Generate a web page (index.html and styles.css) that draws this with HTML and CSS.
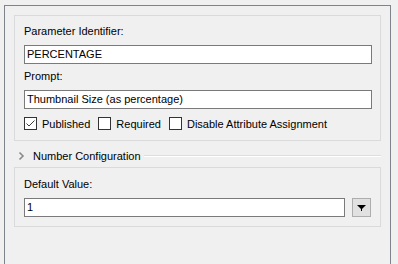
FILE: index.html
```html
<!DOCTYPE html>
<html lang="en">
  <head>
    <meta charset="UTF-8" />
    <title>Parameter Editor</title>
    <link rel="stylesheet" href="styles.css">
  </head>
  <body>
    <div class="frame">
      <div class="panel">
        <div class="label">Parameter Identifier:</div>
        <div class="field">PERCENTAGE</div>
        <div class="label">Prompt:</div>
        <div class="field">Thumbnail Size (as percentage)</div>
        <div class="checks">
          <span class="check">
            <span class="box">
              <svg width="11" height="11" viewBox="0 0 11 11">
                <polyline points="1.5,5.5 4,8 9.5,2.5" fill="none" stroke="#3c3c3c" stroke-width="1" />
              </svg>
            </span>
            Published
          </span>
          <span class="check"><span class="box"></span>Required</span>
          <span class="check"><span class="box"></span>Disable Attribute Assignment</span>
        </div>
      </div>

      <div class="section-head">
        <svg class="chevron" width="7" height="10" viewBox="0 0 7 10">
          <polyline points="1.5,1.5 5,5 1.5,8.5" fill="none" stroke="#8a8a8a" stroke-width="1.6" />
        </svg>
        <span class="section-title">Number Configuration</span>
        <span class="rule"></span>
      </div>

      <div class="panel panel-number">
        <div class="label">Default Value:</div>
        <div class="combo">
          <div class="field">1</div>
          <button class="drop">
            <svg width="9" height="6" viewBox="0 0 9 6">
              <polygon points="0,0 9,0 4.5,4.5" fill="#000" />
              <rect x="4" y="4" width="1" height="2" fill="#000" />
            </svg>
          </button>
        </div>
      </div>
    </div>
  </body>
</html>
```

FILE: styles.css
```css
body {
  margin: 0;
  padding: 0;
  background-color: #f0f0f0;
  font-family: "Liberation Sans", Arial, sans-serif;
  font-size: 11px;
  color: #000;
}
.frame {
  margin: 5px 0 0 4px;
  width: 367px;
  height: 260px;
  padding: 9px 9px 0 9px;
  border: 1px solid #7f848c;
  border-bottom: none;
}
.panel {
  border: 1px solid #dadada;
  padding: 8px 8px 9px 9px;
}
.label {
  height: 15px;
  line-height: 15px;
  margin-bottom: 6px;
}
.field {
  height: 17px;
  line-height: 17px;
  padding: 0 2px;
  background-color: #fff;
  border: 1px solid #7a7a7a;
  margin-bottom: 5px;
}
.checks {
  display: flex;
  align-items: center;
  height: 15px;
  margin-top: 7px;
}
.check {
  display: flex;
  align-items: center;
  gap: 5px;
  margin-right: 8px;
  white-space: nowrap;
}
.box {
  display: inline-block;
  flex: none;
  width: 11px;
  height: 11px;
  border: 1px solid #333;
  background-color: #fff;
}
.box svg {
  display: block;
}
.section-head {
  display: flex;
  align-items: center;
  height: 15px;
  margin: 7px 0 4px 0;
  padding-left: 4px;
}
.chevron {
  margin-right: 8px;
}
.section-title {
  white-space: nowrap;
  margin-right: 3px;
}
.rule {
  flex: 1;
  border-top: 1px solid #dedede;
  border-bottom: 1px solid #fff;
}
.panel-number {
  padding: 9px 9px 9px 9px;
}
.combo {
  display: flex;
  align-items: center;
  gap: 7px;
}
.combo .field {
  flex: 1;
  margin-bottom: 0;
}
.drop {
  width: 19px;
  height: 19px;
  padding: 0;
  background-color: #e1e1e1;
  border: 1px solid #adadad;
  display: flex;
  align-items: center;
  justify-content: center;
}
.drop svg {
  display: block;
}
```
